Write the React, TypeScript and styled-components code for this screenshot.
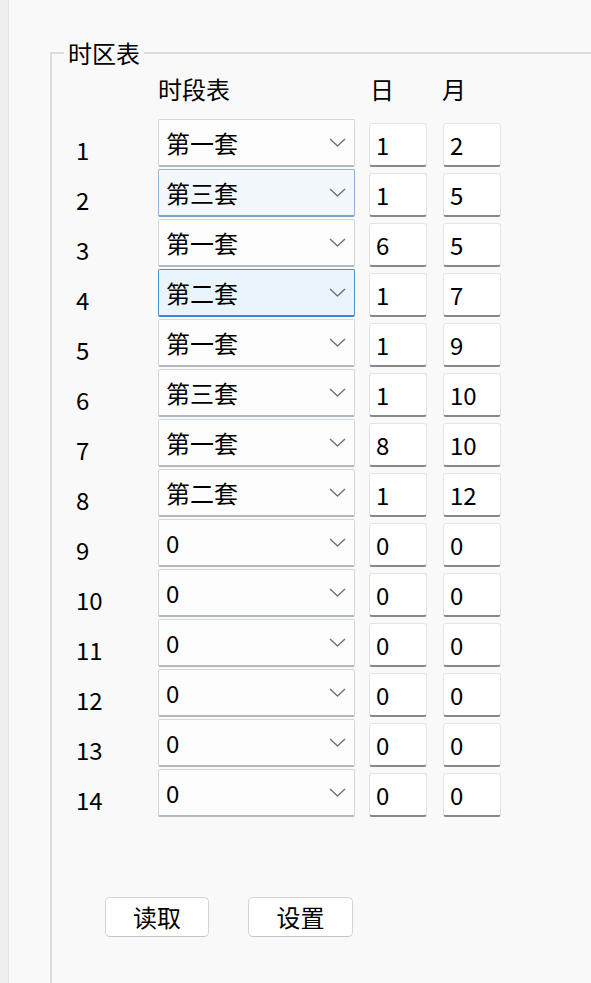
import React, { FC } from 'react';
import styled, { createGlobalStyle, css } from 'styled-components';

const GlobalStyle = createGlobalStyle`
  html, body {
    margin: 0;
    padding: 0;
    background: #f9f9f9;
    overflow: hidden;
  }
  body {
    font-family: "Noto Sans CJK SC", "Noto Sans", sans-serif;
    color: #000;
  }
`;

type ComboState = 'normal' | 'hover' | 'focus';

interface ZoneRow {
  table: string;
  day: string;
  month: string;
  state?: ComboState;
}

const rows: ZoneRow[] = [
  { table: '第一套', day: '1', month: '2' },
  { table: '第三套', day: '1', month: '5', state: 'hover' },
  { table: '第一套', day: '6', month: '5' },
  { table: '第二套', day: '1', month: '7', state: 'focus' },
  { table: '第一套', day: '1', month: '9' },
  { table: '第三套', day: '1', month: '10' },
  { table: '第一套', day: '8', month: '10' },
  { table: '第二套', day: '1', month: '12' },
  { table: '0', day: '0', month: '0' },
  { table: '0', day: '0', month: '0' },
  { table: '0', day: '0', month: '0' },
  { table: '0', day: '0', month: '0' },
  { table: '0', day: '0', month: '0' },
  { table: '0', day: '0', month: '0' },
];

const Window = styled.div`
  display: flex;
  width: 591px;
  height: 983px;
  overflow: hidden;
`;

const SideStrip = styled.div`
  width: 8px;
  flex-shrink: 0;
  background: #efefef;
  border-right: 1px solid #e4e4e4;
`;

const Content = styled.div`
  flex: 1;
  padding: 37px 0 0 41px;
`;

const Group = styled.fieldset`
  margin: 0;
  padding: 0;
  width: 620px;
  height: 1000px;
  box-sizing: border-box;
  border: 2px solid #dcdcdc;
  border-right: none;
  border-bottom: none;
`;

const Legend = styled.legend`
  margin-left: 12px;
  padding: 0 4px;
  font-size: 24px;
  line-height: 32px;
`;

const Table = styled.div`
  display: flex;
  flex-direction: column;
  gap: 2px;
  margin-top: 4px;
`;

const HeaderRow = styled.div`
  display: flex;
  align-items: center;
  height: 32px;
  margin-bottom: 12px;
  font-size: 24px;
  line-height: 32px;
`;

const HeaderCell = styled.div<{ $width: number }>`
  width: ${p => p.$width}px;
`;

const Row = styled.div`
  display: flex;
  align-items: flex-end;
  height: 48px;
`;

const RowLabel = styled.div`
  width: 82px;
  padding-left: 24px;
  align-self: flex-start;
  padding-top: 15px;
  font-size: 24px;
  line-height: 32px;
`;

const comboStates = {
  normal: css`
    background: #fdfdfd;
    border-color: #d3d7db;
    border-bottom-color: #b3b8bd;
  `,
  hover: css`
    background: #f3f8fc;
    border-color: #8fb4d8;
    border-bottom-color: #7aa3cb;
  `,
  focus: css`
    background: #eaf4fc;
    border-color: #4a91d6;
    border-bottom-color: #3a86d2;
  `,
};

const Combo = styled.div<{ $state: ComboState }>`
  box-sizing: border-box;
  width: 197px;
  height: 48px;
  display: flex;
  align-items: center;
  justify-content: space-between;
  padding: 0 8px 0 7px;
  border: 1px solid;
  border-bottom-width: 2px;
  border-radius: 2px;
  font-size: 24px;
  line-height: 32px;
  ${p => comboStates[p.$state]}
`;

const Field = styled.input<{ $left: number }>`
  box-sizing: border-box;
  width: 58px;
  height: 44px;
  margin-left: ${p => p.$left}px;
  padding: 0 6px;
  background: #fff;
  border: 1px solid #e4e4e4;
  border-bottom: 2px solid #878787;
  border-radius: 3px;
  font-family: inherit;
  font-size: 24px;
  color: #000;
  outline: none;
`;

const Buttons = styled.div`
  display: flex;
  gap: 39px;
  margin: 80px 0 0 53px;
`;

const Button = styled.button<{ $width: number }>`
  box-sizing: border-box;
  width: ${p => p.$width}px;
  height: 40px;
  padding: 0;
  background: #fefefe;
  border: 1px solid #d4d4d4;
  border-bottom-color: #c4c4c4;
  border-radius: 5px;
  font-family: inherit;
  font-size: 24px;
  line-height: 32px;
  color: #000;
`;

const Chevron: FC = () => (
  <svg width="17" height="9" viewBox="0 0 17 9" fill="none">
    <path d="M1 1 L8.5 8 L16 1" stroke="#707070" strokeWidth="1.4" strokeLinejoin="round" />
  </svg>
);

const App: FC = () => (
  <>
    <GlobalStyle />
    <Window>
      <SideStrip />
      <Content>
        <Group>
          <Legend>时区表</Legend>
          <Table>
            <HeaderRow>
              <HeaderCell $width={106} />
              <HeaderCell $width={212}>时段表</HeaderCell>
              <HeaderCell $width={72}>日</HeaderCell>
              <HeaderCell $width={58}>月</HeaderCell>
            </HeaderRow>
            {rows.map((r, i) => (
              <Row key={i}>
                <RowLabel>{i + 1}</RowLabel>
                <Combo $state={r.state ?? 'normal'}>
                  <span>{r.table}</span>
                  <Chevron />
                </Combo>
                <Field $left={14} value={r.day} readOnly />
                <Field $left={16} value={r.month} readOnly />
              </Row>
            ))}
          </Table>
          <Buttons>
            <Button $width={104}>读取</Button>
            <Button $width={105}>设置</Button>
          </Buttons>
        </Group>
      </Content>
    </Window>
  </>
);

export default App;
